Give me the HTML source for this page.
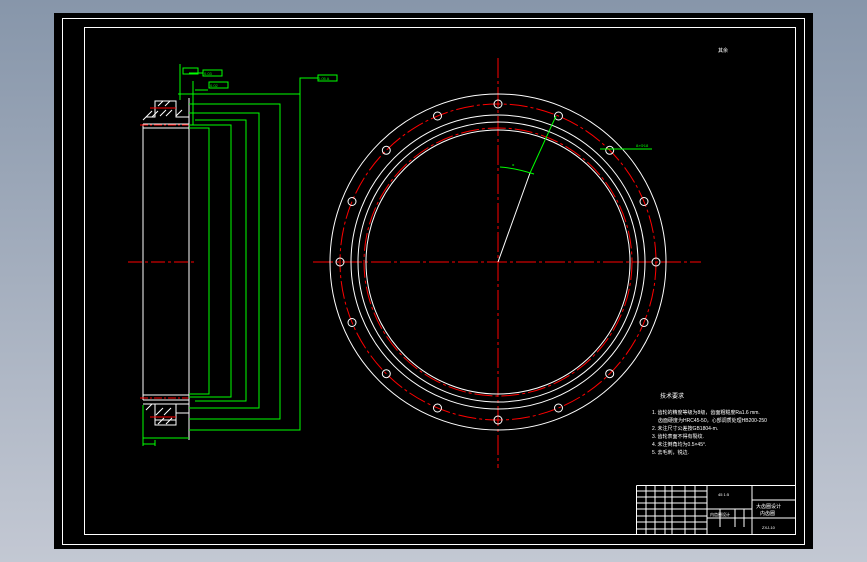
<!DOCTYPE html><html><head><style>
html,body{margin:0;padding:0;width:867px;height:562px;overflow:hidden;background:linear-gradient(#8796aa,#c3c8d3);}
svg{position:absolute;left:0;top:0}
text{font-family:"Liberation Sans","Noto Sans CJK SC",sans-serif;}
</style></head><body>
<svg width="867" height="562" viewBox="0 0 867 562">
<rect x="54" y="13" width="759" height="536" fill="#000"/>
<rect x="62.5" y="18.5" width="742" height="526" fill="none" stroke="#fff" stroke-width="1"/>
<rect x="84.5" y="27.5" width="711" height="507" fill="none" stroke="#fff" stroke-width="1"/>
<g fill="none" stroke-width="1">
<!-- center lines -->
<line x1="313" y1="262" x2="701" y2="262" stroke="#f00" stroke-dasharray="20,3,3,3"/>
<line x1="128" y1="262" x2="196" y2="262" stroke="#f00" stroke-dasharray="14,3,3,3"/>
<line x1="498" y1="58" x2="498" y2="468" stroke="#f00" stroke-dasharray="20,3,3,3"/>
<!-- circles -->
<circle cx="498" cy="262" r="168" stroke="#fff"/>
<circle cx="498" cy="262" r="158" stroke="#f00" stroke-dasharray="18,3,3,3"/>
<circle cx="498" cy="262" r="147" stroke="#fff"/>
<circle cx="498" cy="262" r="140" stroke="#fff"/>
<circle cx="498" cy="262" r="134" stroke="#f00" stroke-dasharray="18,3,3,3"/>
<circle cx="498" cy="262" r="132" stroke="#fff"/>
<g stroke="#fff">
<circle cx="656" cy="262" r="4"/><circle cx="644" cy="201.5" r="4"/><circle cx="609.7" cy="150.3" r="4"/><circle cx="558.5" cy="116" r="4"/>
<circle cx="498" cy="104" r="4"/><circle cx="437.5" cy="116" r="4"/><circle cx="386.3" cy="150.3" r="4"/><circle cx="352" cy="201.5" r="4"/>
<circle cx="340" cy="262" r="4"/><circle cx="352" cy="322.5" r="4"/><circle cx="386.3" cy="373.7" r="4"/><circle cx="437.5" cy="408" r="4"/>
<circle cx="498" cy="420" r="4"/><circle cx="558.5" cy="408" r="4"/><circle cx="609.7" cy="373.7" r="4"/><circle cx="644" cy="322.5" r="4"/>
</g>
<line x1="498" y1="262" x2="530" y2="173" stroke="#fff"/>
<line x1="530" y1="173" x2="556" y2="116" stroke="#0f0"/>
<path d="M500 167 Q515 168 534 174" stroke="#0f0"/>
<line x1="600" y1="149" x2="652" y2="149" stroke="#0f0"/>
<!-- left view -->
<g stroke="#fff">
<line x1="143" y1="124" x2="143" y2="400"/>
<line x1="189" y1="98" x2="189" y2="440"/>
<line x1="143" y1="124" x2="189" y2="124"/>
<line x1="143" y1="128" x2="189" y2="128"/>
<line x1="143" y1="395" x2="189" y2="395"/>
<line x1="143" y1="400" x2="189" y2="400"/>
<path d="M143 120 L146 117 L155 117 L155 101 L176 101 L176 117 L189 117"/>
<path d="M143 404 L189 404 M155 404 L155 425 L176 425 L176 404 M155 420 L176 420 M176 413 L189 413"/>
<path d="M146 117 L152 111 M152 117 L158 111 M160 116 L166 110 M166 116 L172 110 M176 116 L182 110 M158 106 L163 101 M165 106 L170 101 M146 410 L152 404 M156 415 L163 408 M164 415 L171 408 M158 424 L164 418 M166 424 L172 418"/>
</g>
<line x1="140" y1="125" x2="188" y2="125" stroke="#f00" stroke-dasharray="8,2,2,2"/>
<line x1="140" y1="398" x2="188" y2="398" stroke="#f00" stroke-dasharray="8,2,2,2"/>
<line x1="150" y1="108" x2="176" y2="108" stroke="#f00"/>
<line x1="150" y1="417" x2="176" y2="417" stroke="#f00"/>
<g stroke="#0f0">
<path d="M178 94 L300 94 L300 430 L189 430"/>
<path d="M189 104 L280 104 L280 419 L189 419"/>
<path d="M189 113 L259 113 L259 408 L189 408"/>
<path d="M195 120 L246 120 L246 401 L195 401"/>
<path d="M189 125 L231 125 L231 397 L189 397"/>
<path d="M189 128 L209 128 L209 394 L189 394"/>
<path d="M300 94 L300 78 L318 78"/>
<rect x="318" y="75" width="19" height="6"/>
<rect x="209" y="82" width="19" height="6"/><rect x="203" y="70" width="19" height="6"/><rect x="183" y="72" width="15" height="6" transform="translate(0,-4)"/>
<path d="M180 64 L180 100 M193 81 L193 125 M195 90 L208 90 M189 73 L203 73"/>
<path d="M143 405 L143 446 M155 440 L155 446 M143 438 L189 438 M143 444 L155 444"/>
</g>
<!-- title block -->
<g stroke="#fff">
<path d="M636.5 485.5 H795 M636.5 485.5 V535 M707 485.5 V535 M752 485.5 V535 M752 500 H795 M752 518 H795 M707 509 H752 M707 518 H752"/>
<path d="M636 491 H707 M636 497 H707 M636 503 H707 M636 509 H707 M636 516 H707 M636 522 H707 M636 529 H707 M646 485 V535 M655 485 V535 M665 485 V535 M672 485 V535 M685 485 V535 M695 485 V535 M720 509 V527 M735 509 V527 M744 509 V527"/>
</g>
</g>
<g fill="#fff" font-size="5">
<text x="660" y="398" font-size="6">技术要求</text>
<text x="652" y="414">1. 齿轮的精度等级为8级，齿面粗糙度Ra1.6 mm.</text>
<text x="658" y="422">齿面硬度为HRC45-50，心部调质处理HB200-250</text>
<text x="652" y="430">2. 未注尺寸公差按GB1804-m.</text>
<text x="652" y="438">3. 齿轮表面不得有裂纹.</text>
<text x="652" y="446">4. 未注倒角均为0.5×45°.</text>
<text x="652" y="454">5. 去毛刺，锐边.</text>
<text x="718" y="496" font-size="4">45 1:5</text>
<text x="756" y="508">大齿圈设计</text>
<text x="760" y="515">内齿圈</text>
<text x="762" y="529" font-size="4">ZXJ-10</text>
<text x="710" y="516" font-size="4">内齿圈设计</text>
<text x="718" y="52" font-size="5">其余</text>
</g>
<g fill="#0f0" font-size="4">
<text x="318" y="80">0.05 A</text><text x="210" y="87">0.02</text><text x="204" y="75">0.03</text><text x="636" y="147">8×Φ18</text>
<text x="512" y="166">α</text>
</g>
</svg></body></html>
